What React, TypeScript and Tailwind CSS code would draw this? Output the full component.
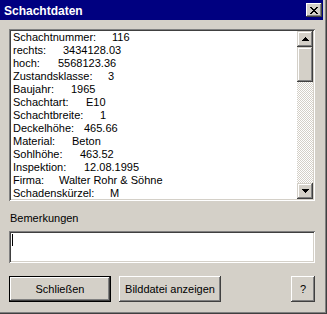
const rows: { label: string; value: string; w: number }[] = [
  { label: 'Schachtnummer:', value: '116', w: 99 },
  { label: 'rechts:', value: '3434128.03', w: 50 },
  { label: 'hoch:', value: '5568123.36', w: 45 },
  { label: 'Zustandsklasse:', value: '3', w: 95 },
  { label: 'Baujahr:', value: '1965', w: 58 },
  { label: 'Schachtart:', value: 'E10', w: 73 },
  { label: 'Schachtbreite:', value: '1', w: 87 },
  { label: 'Deckelhöhe:', value: '465.66', w: 71 },
  { label: 'Material:', value: 'Beton', w: 59 },
  { label: 'Sohlhöhe:', value: '463.52', w: 67 },
  { label: 'Inspektion:', value: '12.08.1995', w: 71 },
  { label: 'Firma:', value: 'Walter Rohr & Söhne', w: 46 },
  { label: 'Schadenskürzel:', value: 'M', w: 97 },
];

const raised =
  'bg-[#d4d0c8] shadow-[inset_-1px_-1px_#404040,inset_1px_1px_#d4d0c8,inset_-2px_-2px_#808080,inset_2px_2px_#ffffff]';
const button =
  'bg-[#d4d0c8] shadow-[inset_-1px_-1px_#404040,inset_1px_1px_#ffffff,inset_-2px_-2px_#808080]';
const sunken =
  'bg-white shadow-[inset_1px_1px_#808080,inset_-1px_-1px_#ffffff,inset_2px_2px_#404040,inset_-2px_-2px_#d4d0c8]';

function Arrow({ down }: { down?: boolean }) {
  const r = [0, 1, 2, 3];
  return (
    <svg width="7" height="4" viewBox="0 0 7 4" shapeRendering="crispEdges">
      {r.map((i) => {
        const y = down ? i : 3 - i;
        return <rect key={i} x={i} y={y} width={7 - 2 * i} height="1" fill="#000" />;
      })}
    </svg>
  );
}

function CloseGlyph() {
  const px = [
    'XX....XX',
    '.XX..XX.',
    '..XXXX..',
    '...XX...',
    '..XXXX..',
    '.XX..XX.',
    'XX....XX',
  ];
  return (
    <svg width="8" height="7" viewBox="0 0 8 7" shapeRendering="crispEdges">
      {px.map((row, y) =>
        row.split('').map((c, x) => (c === 'X' ? <rect key={`${x}-${y}`} x={x} y={y} width="1" height="1" fill="#000" /> : null))
      )}
    </svg>
  );
}

export default function App() {
  return (
    <div className="w-[327px] h-[314px] bg-[#d4d0c8] flex flex-col pr-[4px] pb-[4px] shadow-[inset_-1px_-1px_#404040,inset_-2px_-2px_#808080] font-['Liberation_Sans',Arial,sans-serif] text-[11px] text-black">
      <div className="h-[20px] bg-[#000080] flex items-center justify-between pl-[4px] pr-[1px]">
        <span className="text-white font-bold text-[12px] leading-[20px] pt-[1px]">Schachtdaten</span>
        <div className={`w-[16px] h-[14px] flex items-center justify-center ${button}`}>
          <CloseGlyph />
        </div>
      </div>

      <div className="flex flex-col pl-[9px] pr-[8px]">
        <div className={`mt-[9px] h-[172px] p-[2px] flex ${sunken}`}>
          <div className="flex-1 overflow-hidden pl-[2px] leading-[13px]">
            {rows.map((r) => (
              <div key={r.label} className="whitespace-nowrap">
                <span className="inline-block" style={{ width: r.w }}>
                  {r.label}
                </span>
                <span>{r.value}</span>
              </div>
            ))}
          </div>
          <div className="w-[16px] flex flex-col">
            <div className={`h-[16px] flex items-center justify-center ${raised}`}>
              <Arrow />
            </div>
            <div className={`h-[35px] ${raised}`} />
            <div className="flex-1 bg-[image:repeating-conic-gradient(#d4d0c8_0%_25%,#ffffff_0%_50%)] bg-[length:2px_2px]" />
            <div className={`h-[16px] flex items-center justify-center ${raised}`}>
              <Arrow down />
            </div>
          </div>
        </div>

        <div className="mt-[11px] pl-[1px] leading-[13px]">Bemerkungen</div>

        <div className={`mt-[6px] h-[32px] px-[3px] pt-[3px] ${sunken}`}>
          <div className="w-[1px] h-[12px] bg-black" />
        </div>

        <div className="mt-[13px] h-[26px] flex">
          <div className="w-[102px] border border-black">
            <div className={`h-full flex items-center justify-center ${button}`}>Schließen</div>
          </div>
          <div className={`ml-[8px] w-[102px] flex items-center justify-center ${button}`}>Bilddatei anzeigen</div>
          <div className={`ml-auto w-[24px] flex items-center justify-center ${button}`}>?</div>
        </div>
      </div>
    </div>
  );
}
